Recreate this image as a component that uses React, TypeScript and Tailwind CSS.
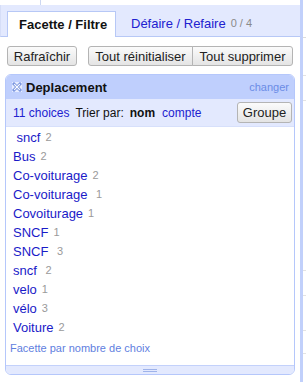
import React from "react";

const items: { label: string; count: number }[] = [
  { label: " sncf", count: 2 },
  { label: "Bus", count: 2 },
  { label: "Co-voiturage", count: 2 },
  { label: "Co-voiturage ", count: 1 },
  { label: "Covoiturage", count: 1 },
  { label: "SNCF", count: 1 },
  { label: "SNCF ", count: 3 },
  { label: "sncf ", count: 2 },
  { label: "velo", count: 1 },
  { label: "vélo", count: 3 },
  { label: "Voiture", count: 2 },
];

const btn =
  "h-[20px] flex items-center justify-center border border-[#b4b4b4] rounded-[3px] bg-gradient-to-b from-[#fbfbfb] to-[#e4e4e4] text-[13px] text-[#222] leading-none";

function CloseIcon() {
  return (
    <svg width="10" height="10" viewBox="0 0 10 10" className="block">
      <rect x="0" y="0" width="10" height="10" fill="#e6ecff" />
      <path d="M2 2 L8 8 M8 2 L2 8" stroke="#7d98e0" strokeWidth="3" strokeLinecap="square" />
      <path d="M2.2 2.2 L7.8 7.8 M7.8 2.2 L2.2 7.8" stroke="#ffffff" strokeWidth="1.1" />
    </svg>
  );
}

export default function App() {
  return (
    <div className="w-[306px] h-[382px] flex bg-white font-['Liberation_Sans',Arial,sans-serif] overflow-hidden">
      <div className="w-[300px] flex flex-col">
        {/* top strip */}
        <div className="h-[5px] flex">
          <div className="ml-[40px] w-px h-full bg-[#ccd7f2]" />
        </div>
        {/* tab bar */}
        <div className="h-[32px] bg-[#e3e9fe] border-b border-[#b7c8f6] flex items-end border-l border-l-[#d6def8]">
          <div className="ml-[6px] -mb-px w-[109px] h-[26px] bg-white border border-b-0 border-[#b7c8f6] flex items-center pl-[11px]">
            <span className="text-[13px] font-bold text-[#111] leading-none">Facette / Filtre</span>
          </div>
          <div className="ml-[15px] h-[26px] flex items-center">
            <span className="text-[13px] text-[#2121d0] leading-none">Défaire / Refaire</span>
            <span className="ml-[5px] text-[11px] text-[#8a8a8a] leading-none">0 / 4</span>
          </div>
        </div>
        {/* buttons */}
        <div className="mt-[9px] flex">
          <div className={`${btn} ml-[7px] w-[70px]`}>Rafraîchir</div>
          <div className={`${btn} ml-[11px] w-[105px] rounded-r-none`}>Tout réinitialiser</div>
          <div className={`${btn} -ml-px w-[101px] rounded-l-none`}>Tout supprimer</div>
        </div>
        {/* facet panel */}
        <div className="mt-[8px] ml-[5px] w-[290px] h-[301px] border border-[#b5c7fb] rounded-[6px] flex flex-col overflow-hidden">
          <div className="h-[24px] bg-[#bfcffd] flex items-center pl-[6px] pr-[5px]">
            <CloseIcon />
            <span className="ml-[4px] text-[13px] font-bold text-[#111] leading-none">Deplacement</span>
            <span className="ml-auto text-[11px] text-[#6b8ce6] leading-none">changer</span>
          </div>
          <div className="h-[28px] bg-[#e3e9fe] border-b border-[#d7e0fb] flex items-center pl-[7px] pr-[2px]">
            <span className="text-[12px] text-[#2121d0] leading-none">11 choices</span>
            <span className="ml-[6px] text-[12px] text-[#111] leading-none">Trier par:</span>
            <span className="ml-[6px] text-[12px] font-bold text-[#111] leading-none">nom</span>
            <span className="ml-[7px] text-[12px] text-[#2121d0] leading-none">compte</span>
            <div className={`${btn} ml-auto w-[55px] h-[21px] text-[12px]`}>Groupe</div>
          </div>
          <div className="flex-1 flex flex-col pt-[1px] bg-white">
            {items.map((it, i) => (
              <div key={i} className="h-[19px] flex items-center pl-[7px] whitespace-pre">
                <span className="text-[13px] text-[#1a1ac8] leading-none">{it.label}</span>
                <span className="ml-[5px] text-[11px] text-[#9a9a9a] leading-none">{it.count}</span>
              </div>
            ))}
            <div className="mt-[4px] pl-[4px] text-[11px] text-[#5f80e0] leading-[14px]">
              Facette par nombre de choix
            </div>
          </div>
          <div className="h-[9px] bg-[#e3e9fe] border-t border-[#c3d1fb] flex flex-col items-center justify-center gap-[1px]">
            <div className="w-[14px] h-px bg-[#9fb3ea]" />
            <div className="w-[14px] h-px bg-[#9fb3ea]" />
          </div>
        </div>
      </div>
      <div className="w-[3px] bg-[#c1d0fb]" />
      <div className="w-[3px] flex flex-col">
        <div className="h-[37px]" />
        <div className="h-px bg-[#dcdcdc]" />
        <div className="h-[37px]" />
        <div className="h-px bg-[#e3e3e3]" />
        <div className="h-[24px]" />
        <div className="h-px bg-[#e3e3e3]" />
        <div className="h-[169px]" />
        <div className="h-px bg-[#e3e3e3]" />
        <div className="h-[24px]" />
        <div className="h-px bg-[#e3e3e3]" />
        <div className="h-[34px]" />
        <div className="h-px bg-[#e3e3e3]" />
        <div className="h-[22px]" />
        <div className="h-px bg-[#e3e3e3]" />
      </div>
    </div>
  );
}
